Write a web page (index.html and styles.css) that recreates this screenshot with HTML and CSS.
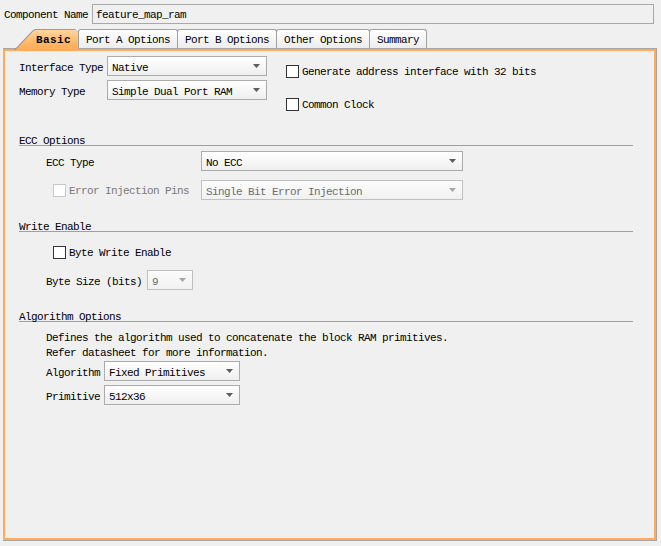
FILE: index.html
```html
<!DOCTYPE html>
<html>
<head>
<meta charset="utf-8">
<title>Block Memory Generator</title>
<link rel="stylesheet" href="styles.css">
</head>
<body>
<div class="app">
  <div class="name-row">
    <span class="name-label">Component Name</span>
    <div class="name-input">feature_map_ram</div>
  </div>

  <div class="tabs">
    <div class="tab tab-active"><span>Basic</span></div>
    <div class="tab">Port A Options</div>
    <div class="tab">Port B Options</div>
    <div class="tab">Other Options</div>
    <div class="tab">Summary</div>
  </div>

  <div class="panel">
    <div class="panel-inner">
      <div class="top-section">
        <div class="form-grid">
          <span class="label">Interface Type</span>
          <div class="select"><span class="value">Native</span><svg class="arrow" width="7" height="4" viewBox="0 0 7 4"><polygon points="0,0 7,0 3.5,4"/></svg></div>
          <span class="label">Memory Type</span>
          <div class="select"><span class="value">Simple Dual Port RAM</span><svg class="arrow" width="7" height="4" viewBox="0 0 7 4"><polygon points="0,0 7,0 3.5,4"/></svg></div>
        </div>
        <div class="checks">
          <div class="check"><span class="box"></span><span class="check-text">Generate address interface with 32 bits</span></div>
          <div class="check"><span class="box"></span><span class="check-text">Common Clock</span></div>
        </div>
      </div>

      <div class="section-header"><span>ECC Options</span></div>
      <div class="row ecc-type">
        <span class="label w155">ECC Type</span>
        <div class="select w262"><span class="value">No ECC</span><svg class="arrow" width="7" height="4" viewBox="0 0 7 4"><polygon points="0,0 7,0 3.5,4"/></svg></div>
      </div>
      <div class="row error-row">
        <div class="check disabled w148"><span class="box"></span><span class="check-text">Error Injection Pins</span></div>
        <div class="select w262 disabled"><span class="value">Single Bit Error Injection</span><svg class="arrow" width="7" height="4" viewBox="0 0 7 4"><polygon points="0,0 7,0 3.5,4"/></svg></div>
      </div>

      <div class="section-header"><span>Write Enable</span></div>
      <div class="row bwe-row">
        <div class="check"><span class="box"></span><span class="check-text">Byte Write Enable</span></div>
      </div>
      <div class="row bsize-row">
        <span class="label w101">Byte Size (bits)</span>
        <div class="select w46 disabled"><span class="value">9</span><svg class="arrow" width="7" height="4" viewBox="0 0 7 4"><polygon points="0,0 7,0 3.5,4"/></svg></div>
      </div>

      <div class="section-header"><span>Algorithm Options</span></div>
      <p class="desc">Defines the algorithm used to concatenate the block RAM primitives.<br>Refer datasheet for more information.</p>
      <div class="row algo-row">
        <span class="label w58">Algorithm</span>
        <div class="select w136"><span class="value">Fixed Primitives</span><svg class="arrow" width="7" height="4" viewBox="0 0 7 4"><polygon points="0,0 7,0 3.5,4"/></svg></div>
      </div>
      <div class="row prim-row">
        <span class="label w58">Primitive</span>
        <div class="select w136"><span class="value">512x36</span><svg class="arrow" width="7" height="4" viewBox="0 0 7 4"><polygon points="0,0 7,0 3.5,4"/></svg></div>
      </div>
    </div>
  </div>
</div>
</body>
</html>
```

FILE: styles.css
```css
* { box-sizing: border-box; }

html, body {
  margin: 0;
  padding: 0;
}

body {
  background: #f0f0f0;
  font-family: "Liberation Mono", "DejaVu Sans Mono", monospace;
  font-size: 11px;
  letter-spacing: -0.6px;
  color: #000;
}

.app {
  height: 546px;
  display: flex;
  flex-direction: column;
}

/* Component name row */
.name-row {
  display: flex;
  align-items: center;
  height: 24px;
  padding: 4px 7px 0 4px;
}

.name-label {
  width: 88px;
  flex: none;
  white-space: nowrap;
  padding-top: 1px;
}

.name-input {
  flex: 1;
  height: 20px;
  border: 1px solid #a9a9a9;
  background: #f0f0f0;
  padding: 1px 0 0 3px;
  line-height: 18px;
}

/* Tabs */
.tabs {
  display: flex;
  align-items: flex-start;
  height: 19px;
  margin-top: 5px;
  padding-left: 14px;
  position: relative;
  z-index: 1;
}

.tab {
  height: 19px;
  line-height: 17px;
  border: 1px solid #a0a0a0;
  border-bottom: none;
  border-radius: 3px 3px 0 0;
  padding: 2px 7px 0;
  margin-left: -1px;
  background: linear-gradient(#ffffff, #ededed);
  white-space: nowrap;
}

.tab-active {
  width: 64px;
  height: 21px;
  padding: 0;
  margin-left: 0;
  border: none;
  border-radius: 0;
  background: #9a9a9a;
  position: relative;
  clip-path: polygon(0 21px, 18px 2px, 21px 0, 61px 0, 64px 3px, 64px 21px);
}

.tab-active::before {
  content: "";
  position: absolute;
  inset: 0;
  background: linear-gradient(#ffd8a4, #ffb563 70%, #ffab58);
  clip-path: polygon(1.5px 21px, 18.7px 2.8px, 21.4px 1px, 61.5px 1px, 64px 3.5px, 64px 21px);
}

.tab-active span {
  position: relative;
  display: block;
  padding: 2px 0 0 22px;
  line-height: 19px;
  font-weight: bold;
  letter-spacing: 0.4px;
}

.tab-active + .tab {
  margin-left: 0;
}

/* Panel */
.panel {
  flex: 1;
  display: flex;
  margin: 0 4px 5px 3px;
  border: 1px solid #a5a5a5;
  border-left: none;
}

.panel-inner {
  flex: 1;
  border: 2px solid #ffab58;
}

/* Top section */
.top-section {
  display: flex;
  margin: 5px 0 0 14px;
}

.form-grid {
  display: grid;
  grid-template-columns: 88px 160px;
  grid-auto-rows: 20px;
  row-gap: 4px;
}

.label {
  display: block;
  height: 20px;
  line-height: 20px;
  padding-top: 2px;
  white-space: nowrap;
}

.checks {
  display: flex;
  flex-direction: column;
  gap: 13px;
  margin-left: 19px;
  padding-top: 5px;
}

.check {
  display: flex;
  align-items: center;
  height: 20px;
  white-space: nowrap;
}

.check-text {
  display: block;
  height: 20px;
  line-height: 20px;
  padding-top: 1px;
}

.box {
  width: 13px;
  height: 13px;
  flex: none;
  border: 1px solid #333333;
  background: #ffffff;
  margin-right: 3px;
}

.check.disabled {
  color: #7a7a7a;
}

.check.disabled .box {
  border-color: #c8c8c8;
}

/* Select */
.select {
  height: 20px;
  display: flex;
  align-items: center;
  justify-content: space-between;
  padding: 0 6px 0 4px;
  border: 1px solid #acacac;
  background: linear-gradient(#ffffff, #efefef);
  white-space: nowrap;
}

.select .value {
  display: block;
  height: 18px;
  line-height: 18px;
  padding-top: 2px;
}

.select .arrow {
  flex: none;
  fill: #5c5c5c;
}

.select.disabled {
  color: #6d6d6d;
  border-color: #c0c0c0;
  background: linear-gradient(#fcfcfc, #f1f1f1);
}

.select.disabled .arrow {
  fill: #a6a6a6;
}

/* Sections */
.section-header {
  margin: 19px 21px 0 14px;
  height: 13px;
  border-bottom: 1px solid #a0a0a0;
}

.section-header span {
  display: block;
  line-height: 12px;
  padding-top: 2px;
  height: 12px;
}

.row {
  display: flex;
  align-items: center;
  height: 20px;
}

.ecc-type { margin: 5px 0 0 41px; }
.error-row { margin: 9px 0 0 48px; }
.bwe-row { margin: 10px 0 0 48px; }
.bsize-row { margin: 8px 0 0 41px; }
.algo-row { margin: 1px 0 0 41px; }
.prim-row { margin: 4px 0 0 41px; }

.desc {
  margin: 8px 0 0 41px;
  padding-top: 1px;
  height: 30px;
  line-height: 15px;
}

.w155 { width: 155px; flex: none; }
.w148 { width: 148px; flex: none; }
.w101 { width: 101px; flex: none; }
.w58 { width: 58px; flex: none; }
.w262 { width: 262px; }
.w136 { width: 136px; }
.w46 { width: 46px; }
```
